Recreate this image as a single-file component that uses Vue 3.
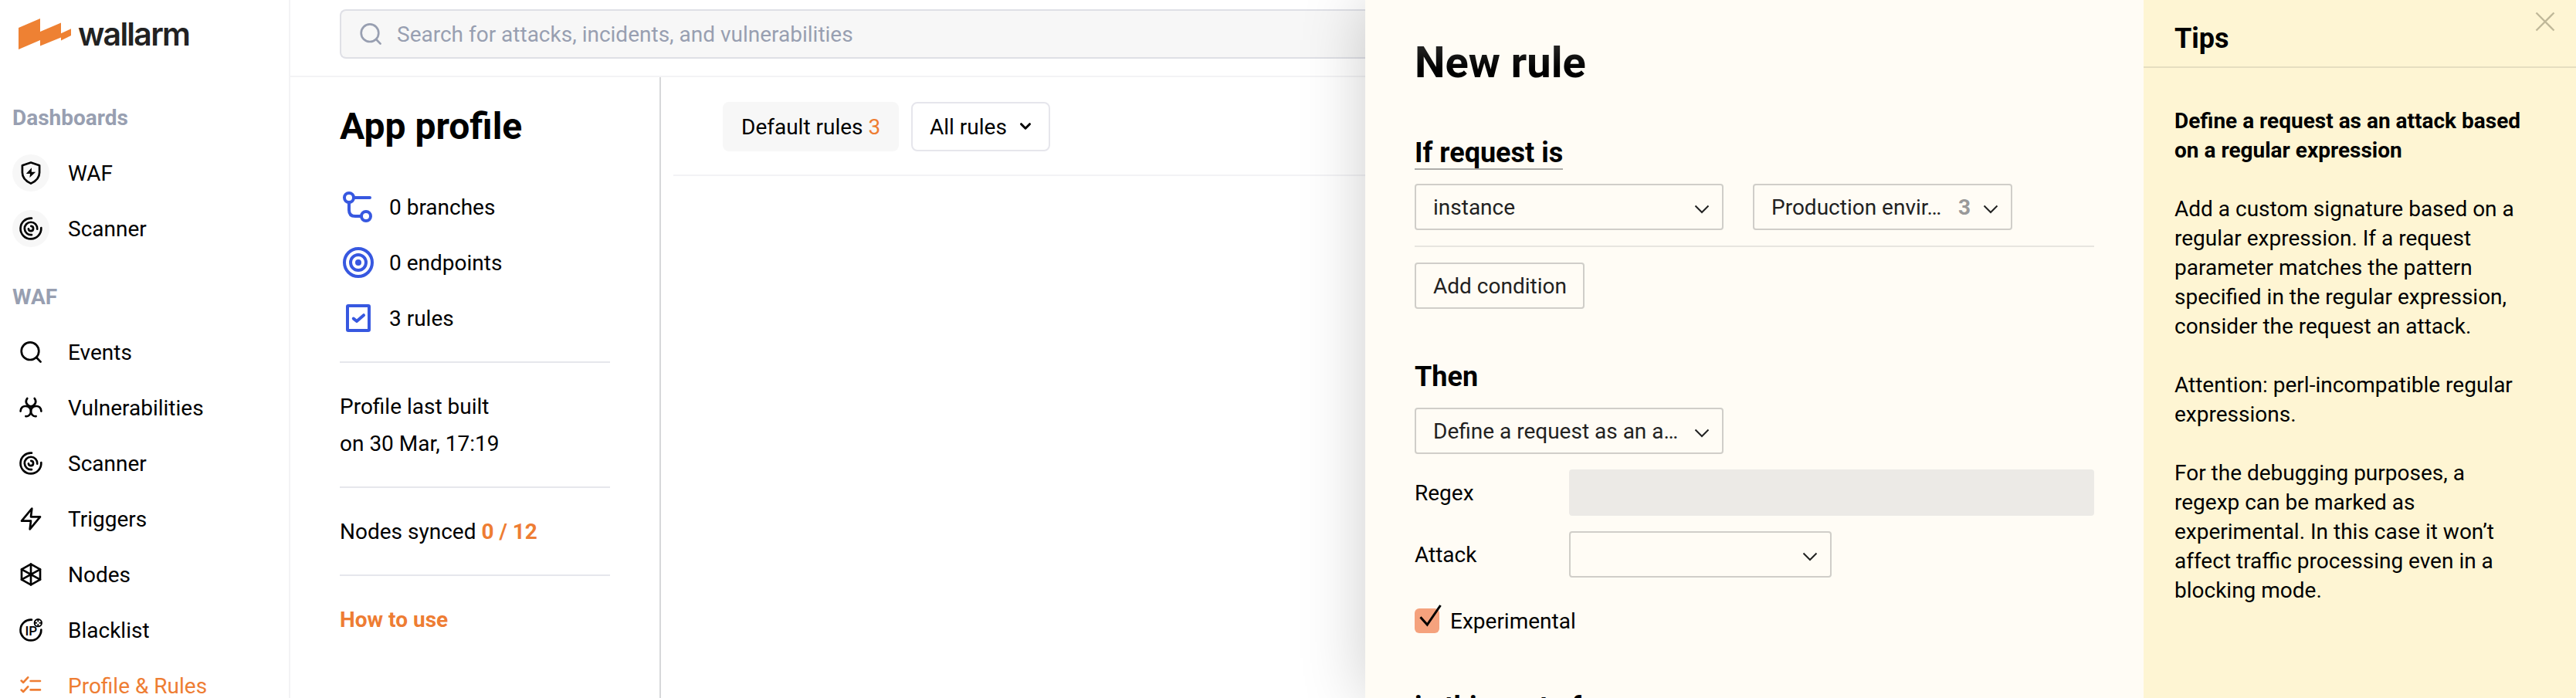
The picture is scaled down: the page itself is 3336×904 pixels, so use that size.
<script setup>
const dashboards = [
  { label: 'WAF', icon: 'shield' },
  { label: 'Scanner', icon: 'scanner' },
]
const waf = [
  { label: 'Events', icon: 'search' },
  { label: 'Vulnerabilities', icon: 'hazard' },
  { label: 'Scanner', icon: 'scanner' },
  { label: 'Triggers', icon: 'bolt' },
  { label: 'Nodes', icon: 'nodes' },
  { label: 'Blacklist', icon: 'blacklist' },
  { label: 'Profile & Rules', icon: 'rules', active: true },
]
const groups = [
  { title: 'Dashboards', items: dashboards, round: true },
  { title: 'WAF', items: waf, round: false },
]
const icons = {
  shield:
    '<path d="M16 2.6 27.1 6.2V15.4C27.1 21.8 22.4 26.6 16 29.6 9.600 26.600 4.900 21.800 4.900 15.400V6.200Z"/><path d="M17 9.300 9.800 17H15l-.6 4.900L22.200 14.700H16.800Z" fill="currentColor" stroke="none"/>',
  scanner:
    '<path d="M17 2.700A13.400 13.400 0 1 0 29.300 15.200"/><path d="M24.200 16.600A8.200 8.200 0 1 0 17 24.100"/><path d="M16.300 12.900A3.100 3.100 0 1 1 12.900 16.300"/>',
  search: '<circle cx="15" cy="14.700" r="11.300"/><path d="M23.200 23 28.600 28.600"/>',
  hazard:
    '<path d="M11.300 4C8.300 7.800 9.600 12.800 16 14.600 22.400 12.800 23.700 7.800 20.700 4"/><path d="M2.600 20.600C2.600 16 5.800 13.700 9.400 14 13.400 14.400 16 17.200 16 21 16 24.600 12.800 27.600 9.400 27.200"/><path d="M29.400 20.600C29.400 16 26.200 13.700 22.600 14 18.600 14.400 16 17.200 16 21 16 24.600 19.200 27.600 22.600 27.200"/>',
  bolt: '<path d="M17.300 2.700 4 18.700H16L14.700 29.300 28 13.300H16Z"/>',
  nodes:
    '<path d="M16 2.700 28 9.300V22.700L16 29.300 4 22.700V9.300Z"/><path d="M16 2.700V29.300M4 9.300 28 22.700M28 9.300 4 22.700"/>',
  blacklist:
    '<path d="M17 2.700A13.400 13.400 0 1 0 29.300 15.500"/><circle cx="25.300" cy="6.700" r="4.700" stroke-width="1.900"/><path d="M25.300 3v1.500M25.300 8.900v1.500M21.600 6.700h1.500M27.500 6.700h1.500" stroke-width="1.900"/><text x="8.400" y="22.800" font-size="17" font-family="Roboto" font-weight="500" fill="currentColor" stroke="none">IP</text>',
  rules:
    '<path d="M3.600 9.600 6.200 11.900 12.200 5.300M3.600 21.600 6.200 23.900 12.200 17.300M15.600 10H28M15.600 21.400H28"/>',
}
const stats = [
  {
    label: '0 branches',
    icon: '<circle cx="12" cy="12" r="6"/><circle cx="34" cy="36" r="6"/><path d="M18 12H39M12 18V28Q12 36 20 36H28"/>',
  },
  {
    label: '0 endpoints',
    icon: '<circle cx="24" cy="24" r="18"/><circle cx="24" cy="24" r="10"/><circle cx="24" cy="24" r="4" fill="currentColor" stroke="none"/>',
  },
  {
    label: '3 rules',
    icon: '<rect x="10" y="8" width="28" height="32" rx="1"/><path d="M17.800 24.600 22 28 31 20.200"/>',
  },
]
</script>

<template>
  <div class="app">
    <aside class="sidebar">
      <div class="logo">
        <svg class="mark" width="68" height="40" viewBox="0 0 68 40">
          <path d="M0 12 28 0V17L55 5.500V19.300L68 13.300V22L55 28.400V24.500L28 35.500V28L0 40Z" fill="#ee8133" />
        </svg>
        <span class="brand">wallarm</span>
      </div>
      <nav v-for="g in groups" :key="g.title" class="group">
        <div class="group-title"><span>{{ g.title }}</span></div>
        <a v-for="i in g.items" :key="i.label" class="item" :class="{ active: i.active }">
          <span class="badge" :class="{ round: g.round }">
            <svg class="icon" width="32" height="32" viewBox="0 0 32 32" v-html="icons[i.icon]" />
          </span>
          <span>{{ i.label }}</span>
        </a>
      </nav>
    </aside>

    <main class="main">
      <header class="topbar">
        <div class="search">
          <svg class="icon" width="32" height="32" viewBox="0 0 32 32" v-html="icons.search" />
          <span>Search for attacks, incidents, and vulnerabilities</span>
        </div>
      </header>
      <div class="content">
        <section class="profile">
          <h2>App profile</h2>
          <div v-for="s in stats" :key="s.label" class="stat">
            <svg class="stat-icon" width="48" height="48" viewBox="0 0 48 48" v-html="s.icon" />
            <span>{{ s.label }}</span>
          </div>
          <div class="block first">Profile last built<br />on 30 Mar, 17:19</div>
          <div class="block">Nodes synced <b>0 / 12</b></div>
          <div class="block"><b>How to use</b></div>
        </section>
        <section class="rules">
          <div class="filters">
            <button class="filter filled">Default rules <span class="count">3</span></button>
            <button class="filter outlined">
              <span>All rules</span>
              <svg width="16" height="12" viewBox="0 0 16 12"><path d="M2.500 2.700 8 8.200 13.500 2.700" stroke="#000" stroke-width="3" fill="none" stroke-linecap="round" stroke-linejoin="round" /></svg>
            </button>
          </div>
        </section>
      </div>
    </main>

    <div class="drawer">
      <section class="form">
        <div class="fade"></div>
        <h1>New rule</h1>
        <h3 class="underlined">If request is</h3>
        <div class="row">
          <div class="select wide">
            <span>instance</span>
            <svg class="chev" width="20" height="12" viewBox="0 0 20 12"><path d="M1.500 1.500 10 10 18.500 1.500" /></svg>
          </div>
          <div class="select mid">
            <span>Production envir…</span>
            <b class="num">3</b>
            <svg class="chev" width="20" height="12" viewBox="0 0 20 12"><path d="M1.500 1.500 10 10 18.500 1.500" /></svg>
          </div>
        </div>
        <div class="line"></div>
        <button class="add">Add condition</button>
        <h3 class="then">Then</h3>
        <div class="select wide">
          <span>Define a request as an a…</span>
          <svg class="chev" width="20" height="12" viewBox="0 0 20 12"><path d="M1.500 1.500 10 10 18.500 1.500" /></svg>
        </div>
        <div class="field">
          <label>Regex</label>
          <div class="input"></div>
        </div>
        <div class="field">
          <label>Attack</label>
          <div class="select small">
            <span></span>
            <svg class="chev" width="20" height="12" viewBox="0 0 20 12"><path d="M1.500 1.500 10 10 18.500 1.500" /></svg>
          </div>
        </div>
        <div class="check">
          <span class="box">
            <svg width="32" height="32" viewBox="0 0 32 32"><path d="M7.500 11.200 16.300 21 33.500 -4" fill="none" stroke="#000" stroke-width="3" /></svg>
          </span>
          <span>Experimental</span>
        </div>
        <h3 class="part">in this part of</h3>
      </section>

      <aside class="tips">
        <header class="tips-head">
          <span>Tips</span>
          <svg class="close" width="28" height="28" viewBox="0 0 28 28"><path d="M2.500 2.500 25.500 25.500M25.500 2.500 2.500 25.500" stroke="#c0b899" stroke-width="2.300" fill="none" /></svg>
        </header>
        <div class="tips-body">
          <p><b>Define a request as an attack based on a regular expression</b></p>
          <p>Add a custom signature based on a regular expression. If a request parameter matches the pattern specified in the regular expression, consider the request an attack.</p>
          <p>Attention: perl-incompatible regular expressions.</p>
          <p>For the debugging purposes, a regexp can be marked as experimental. In this case it won’t affect traffic processing even in a blocking mode.</p>
        </div>
      </aside>
    </div>
  </div>
</template>

<style>
html,
body {
  margin: 0;
  overflow: hidden;
}
</style>

<style scoped>
* {
  box-sizing: border-box;
}
.app {
  display: flex;
  width: 3336px;
  height: 904px;
  overflow: hidden;
  background: #fff;
  color: #000;
  font-family: Roboto, "Liberation Sans", sans-serif;
  font-size: 28px;
}
h1,
h2,
h3,
p {
  margin: 0;
}
button {
  font: inherit;
  color: inherit;
  margin: 0;
  text-align: left;
}
.sidebar {
  width: 376px;
  flex: none;
  border-right: 2px solid #f3f3f5;
}
.logo {
  height: 100px;
  padding: 24px 0 0 24px;
  display: flex;
  align-items: flex-start;
  gap: 9px;
}
.brand {
  font-family: Inter, sans-serif;
  font-weight: 600;
  font-size: 41px;
  line-height: 40px;
  letter-spacing: -1.75px;
  color: #222;
}
.group {
  padding: 16px 16px 0;
}
.group-title {
  display: flex;
  align-items: center;
  height: 72px;
  font-weight: 700;
  color: #989fb1;
}
.item {
  display: flex;
  align-items: center;
  height: 72px;
  gap: 24px;
}
.item.active {
  color: #ee7d33;
}
.badge {
  width: 48px;
  height: 48px;
  display: flex;
  align-items: center;
  justify-content: center;
  border-radius: 50%;
}
.badge.round {
  background: #f7f7f7;
}
.icon {
  fill: none;
  stroke: currentColor;
  stroke-width: 2.67;
  stroke-linecap: round;
  stroke-linejoin: round;
}
.main {
  flex: 1;
  min-width: 0;
  display: flex;
  flex-direction: column;
}
.topbar {
  height: 100px;
  flex: none;
  border-bottom: 2px solid #f3f3f5;
  padding: 12px 0 0 64px;
}
.search {
  height: 64px;
  border: 2px solid #dfe0e6;
  border-right: 0;
  border-radius: 8px 0 0 8px;
  background: #f7f7f7;
  display: flex;
  align-items: center;
  gap: 18px;
  padding-left: 22px;
  color: #989fb1;
}
.content {
  flex: 1;
  display: flex;
  min-height: 0;
}
.profile {
  width: 480px;
  border-right: 2px solid #d7d8da;
  padding: 32px 64px 0;
}
.profile h2 {
  font-size: 48px;
  line-height: 64px;
  margin-bottom: 36px;
}
.stat {
  height: 72px;
  display: flex;
  align-items: center;
  gap: 16px;
}
.stat-icon {
  color: #3758e0;
  fill: none;
  stroke: currentColor;
  stroke-width: 4;
  stroke-linecap: round;
  stroke-linejoin: round;
}
.block {
  width: 350px;
  border-top: 2px solid #e6e7ec;
  padding: 33px 0 31px;
  line-height: 48px;
}
.block.first {
  margin-top: 20px;
}
.block b,
.count {
  color: #ee7d33;
}
.rules {
  flex: 1;
  padding-left: 16px;
}
.filters {
  height: 128px;
  border-bottom: 2px solid #f3f3f5;
  padding: 32px 0 0 64px;
  display: flex;
  align-items: flex-start;
  gap: 16px;
}
.filter {
  height: 64px;
  border-radius: 8px;
  display: flex;
  align-items: center;
  border: 2px solid transparent;
  padding: 0 22px;
}
.filter.filled {
  width: 228px;
  background: #f7f7f7;
  white-space: pre;
}
.filter.outlined {
  width: 180px;
  border-color: #e6e6ec;
  background: #fff;
  justify-content: space-between;
}
.drawer {
  width: 1568px;
  flex: none;
  display: flex;
  position: relative;
  z-index: 1;
  box-shadow: 0 0 80px rgba(0, 0, 0, 0.2);
}
.form {
  width: 1008px;
  background: #fffcf5;
  padding: 49px 64px 0;
  position: relative;
}
.fade {
  position: absolute;
  left: 0;
  right: 0;
  top: 0;
  height: 90px;
  background: linear-gradient(#fffcf5, rgba(255, 252, 245, 0.14) 60px, rgba(255, 252, 245, 0));
}
h1 {
  font-size: 56px;
  line-height: 64px;
  margin-bottom: 65px;
}
h3 {
  font-size: 36px;
  line-height: 40px;
}
.underlined {
  width: fit-content;
  border-bottom: 2px solid #adaca8;
  margin-bottom: 18px;
}
.row {
  display: flex;
  gap: 38px;
}
.select {
  height: 60px;
  border: 2px solid #d0cec9;
  border-radius: 4px;
  display: flex;
  align-items: center;
  padding: 0 16px 0 22px;
  color: #222;
  white-space: nowrap;
}
.select span {
  flex: 1;
}
.wide {
  width: 400px;
}
.mid {
  width: 336px;
}
.small {
  width: 340px;
}
.num {
  color: #999;
  margin-right: 16px;
}
.chev {
  position: relative;
  top: 3px;
  fill: none;
  stroke: #222;
  stroke-width: 2;
}
.line {
  height: 2px;
  background: #e7e5df;
  margin: 20px 0;
}
.add {
  width: 220px;
  height: 60px;
  border: 2px solid #d0cec9;
  border-radius: 4px;
  background: none;
  color: #222;
  padding: 0 22px;
  display: flex;
  align-items: center;
  white-space: nowrap;
}
.then {
  margin: 68px 0 20px;
}
.field {
  display: flex;
  align-items: center;
  margin-top: 20px;
}
.field label {
  width: 200px;
}
.input {
  flex: 1;
  height: 60px;
  border-radius: 4px;
  background: #eceae6;
}
.check {
  display: flex;
  align-items: center;
  height: 32px;
  gap: 14px;
  margin-top: 40px;
}
.box {
  width: 32px;
  height: 32px;
  border-radius: 6px;
  background: #f5a27d;
}
.box svg {
  display: block;
  overflow: visible;
}
.part {
  margin-top: 76px;
}
.tips {
  width: 560px;
  background: #fef5d3;
}
.tips-head {
  height: 88px;
  border-bottom: 2px solid #e6dec0;
  padding: 0 26px 0 40px;
  display: flex;
  justify-content: space-between;
  font-size: 36px;
  font-weight: 700;
  line-height: 100px;
}
.close {
  margin-top: 14px;
}
.tips-body {
  padding: 50px 64px 0 40px;
  line-height: 38px;
}
.tips-body p {
  margin-bottom: 38px;
}
</style>
